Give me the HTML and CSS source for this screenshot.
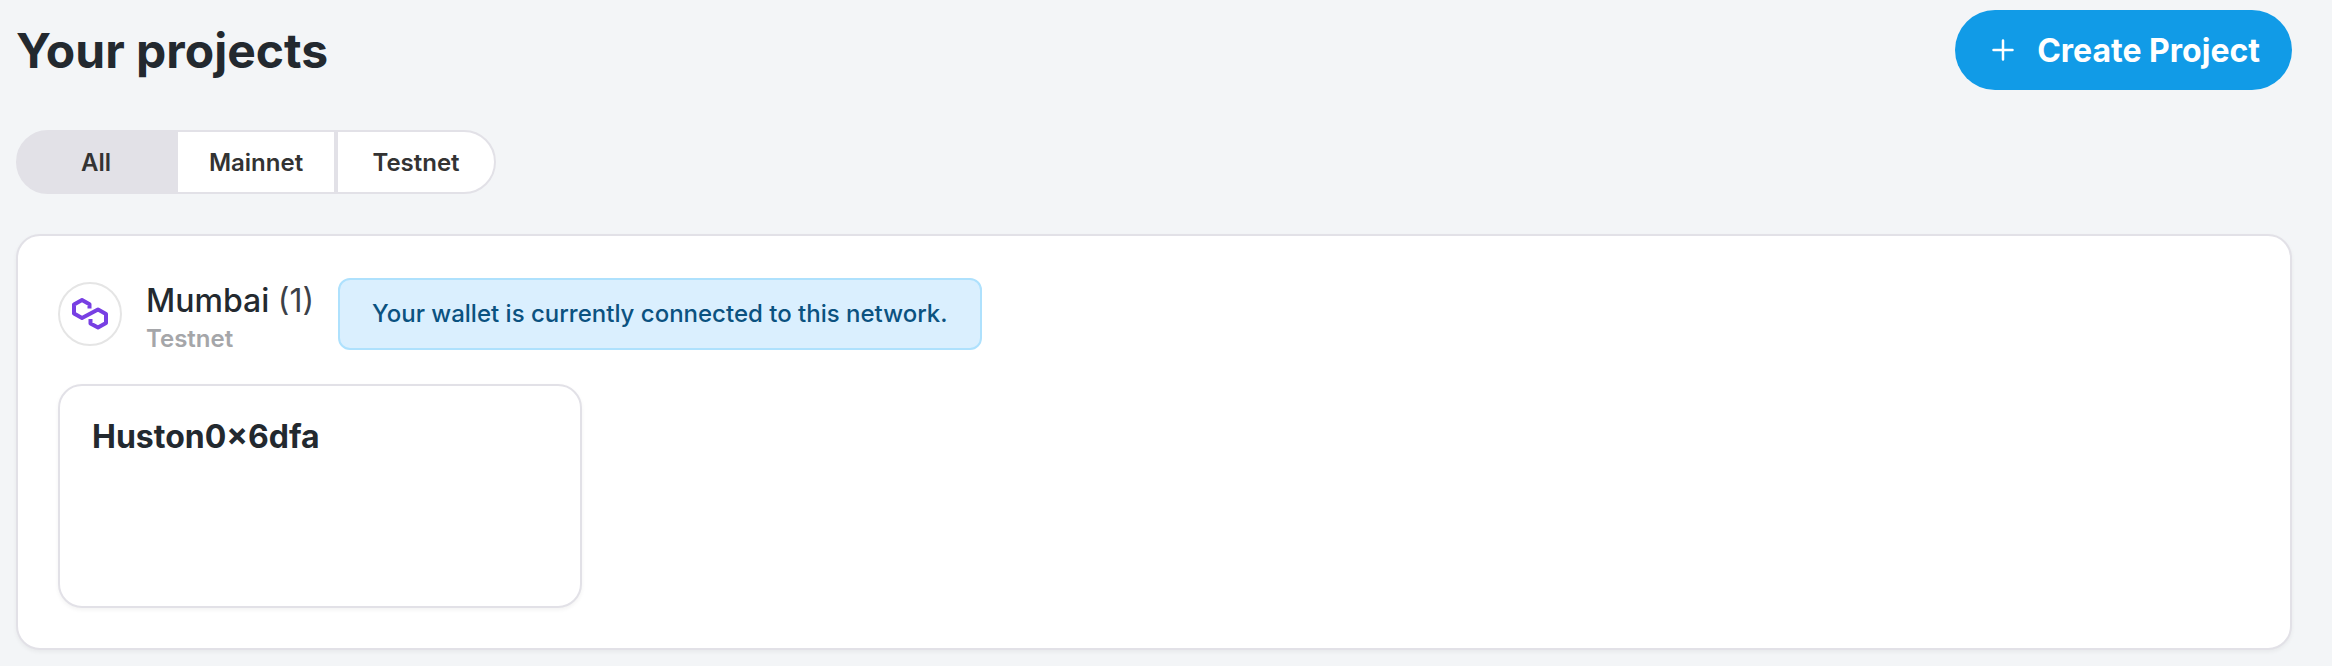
FILE: index.html
```html
<!DOCTYPE html>
<html lang="en">
<head>
<meta charset="utf-8">
<meta name="viewport" content="width=device-width, initial-scale=1">
<title>Your projects</title>
<link rel="stylesheet" href="styles.css">
</head>
<body>
<main class="page">
  <header class="page-header">
    <h1 class="page-title">Your projects</h1>
    <button class="create-button" type="button">
      <svg class="create-icon" viewBox="0 0 24 24" aria-hidden="true"><path d="M12 2.500v19M2.500 12h19"/></svg>
      <span>Create Project</span>
    </button>
  </header>

  <div class="filter" role="group" aria-label="Network type">
    <button class="filter-option filter-option-active" type="button" aria-pressed="true">All</button>
    <button class="filter-option" type="button" aria-pressed="false">Mainnet</button>
    <button class="filter-option" type="button" aria-pressed="false">Testnet</button>
  </div>

  <section class="network">
    <div class="network-header">
      <span class="network-logo">
        <svg viewBox="0 0 36 32" aria-hidden="true"><path d="M17.500 10.500V6.200L10 2L2 6.500V15.500L10 20L26 11.500L34 16V25L26 29.500L18.500 25.500V21"/></svg>
      </span>
      <div class="network-label">
        <h2 class="network-name">Mumbai <span class="network-count">(1)</span></h2>
        <p class="network-type">Testnet</p>
      </div>
      <p class="notice" role="status">Your wallet is currently connected to this network.</p>
    </div>
    <div class="project-list">
      <a class="project-card" href="#project">
        <h3 class="project-name">Huston0×6dfa</h3>
      </a>
    </div>
  </section>
</main>
</body>
</html>
```

FILE: styles.css
```css
*, *::before, *::after {
  box-sizing: border-box;
}

body {
  margin: 0;
  background: #f3f5f7;
  color: #23292f;
  font-family: Inter, "Liberation Sans", sans-serif;
}

h1, h2, h3, p {
  margin: 0;
}

button {
  font-family: inherit;
  cursor: pointer;
}

.page {
  display: flex;
  flex-direction: column;
  align-items: stretch;
  gap: 40px;
  padding: 10px 40px 16px 16px;
}

.page-header {
  display: flex;
  align-items: center;
  justify-content: space-between;
}

.page-title {
  padding-top: 2px;
  font-size: 48px;
  line-height: 64px;
  font-weight: 700;
}

.create-button {
  display: flex;
  align-items: center;
  gap: 22px;
  height: 80px;
  padding: 0 32px 0 36px;
  border: 0;
  border-radius: 40px;
  background: #119be7;
  color: #fff;
  font-size: 32px;
  font-weight: 700;
}

.create-icon {
  width: 24px;
  height: 24px;
  fill: none;
  stroke: currentColor;
  stroke-width: 2.5;
  stroke-linecap: round;
}

.filter {
  display: flex;
  align-self: flex-start;
}

.filter-option {
  width: 160px;
  height: 64px;
  padding: 0;
  border: 2px solid #e2e1e7;
  background: #fff;
  color: #333;
  font-size: 24px;
  font-weight: 600;
}

.filter-option:first-child {
  border-radius: 32px 0 0 32px;
}

.filter-option:last-child {
  border-radius: 0 32px 32px 0;
}

.filter-option-active {
  background: #e2e1e7;
}

.network {
  display: flex;
  flex-direction: column;
  gap: 32px;
  padding: 40px;
  border: 2px solid #e2e1e7;
  border-radius: 24px;
  background: #fff;
  box-shadow: 0 2px 4px rgba(0, 0, 0, 0.05);
}

.network-header {
  display: flex;
  align-items: center;
  gap: 24px;
}

.network-logo {
  display: flex;
  align-items: center;
  justify-content: center;
  width: 64px;
  height: 64px;
  border: 2px solid #e5e5e5;
  border-radius: 50%;
}

.network-logo svg {
  width: 36px;
  height: 32px;
  fill: none;
  stroke: #783fe3;
  stroke-width: 4;
  stroke-linejoin: round;
}

.network-label {
  display: flex;
  flex-direction: column;
}

.network-name {
  font-size: 32px;
  line-height: 50px;
  font-weight: 500;
}

.network-count {
  color: #3c4148;
  font-weight: 400;
}

.network-type {
  color: #a5a6a9;
  font-size: 24px;
  line-height: 26px;
  font-weight: 600;
}

.notice {
  padding: 16px 32px;
  border: 2px solid #aee1fd;
  border-radius: 12px;
  background: #daeffe;
  color: #0b5280;
  font-size: 24px;
  line-height: 36px;
  font-weight: 500;
}

.project-list {
  display: grid;
  grid-template-columns: repeat(auto-fill, 524px);
  gap: 24px;
}

.project-card {
  min-height: 224px;
  padding: 28px 32px;
  border: 2px solid #e2e1e7;
  border-radius: 24px;
  background: #fff;
  box-shadow: 0 2px 4px rgba(0, 0, 0, 0.05);
  color: inherit;
  text-decoration: none;
}

.project-name {
  font-size: 32px;
  line-height: 46px;
  font-weight: 700;
}
```
